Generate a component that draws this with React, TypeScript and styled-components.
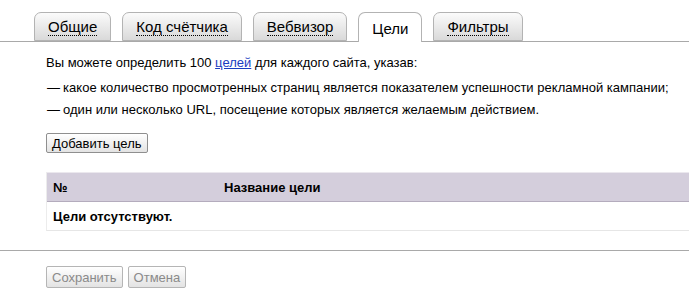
import React from 'react';
import styled, { createGlobalStyle } from 'styled-components';

type Tab = {
    title: string;
    active?: boolean;
};

const tabs: Tab[] = [
    { title: 'Общие' },
    { title: 'Код счётчика' },
    { title: 'Вебвизор' },
    { title: 'Цели', active: true },
    { title: 'Фильтры' },
];

export default function App() {
    return (
        <StyledPage>
            <GlobalStyle />
            <StyledTabs>
                {tabs.map((tab) => (
                    <StyledTab key={tab.title} active={tab.active}>
                        <StyledTabTitle active={tab.active}>{tab.title}</StyledTabTitle>
                    </StyledTab>
                ))}
            </StyledTabs>
            <StyledContent>
                <StyledIntro>
                    Вы можете определить 100 <StyledLink href="#">целей</StyledLink> для
                    каждого сайта, указав:
                </StyledIntro>
                <StyledList>
                    <StyledItem>
                        какое количество просмотренных страниц является показателем
                        успешности рекламной кампании;
                    </StyledItem>
                    <StyledItem>
                        один или несколько URL, посещение которых является желаемым
                        действием.
                    </StyledItem>
                </StyledList>
                <StyledButton>Добавить цель</StyledButton>
                <StyledTable>
                    <StyledHead>
                        <StyledNumCell>№</StyledNumCell>
                        <StyledCell>Название цели</StyledCell>
                    </StyledHead>
                    <StyledRow>
                        <StyledCell>Цели отсутствуют.</StyledCell>
                    </StyledRow>
                </StyledTable>
            </StyledContent>
            <StyledFooter>
                <StyledButton disabled tall>
                    Сохранить
                </StyledButton>
                <StyledButton disabled tall>
                    Отмена
                </StyledButton>
            </StyledFooter>
        </StyledPage>
    );
}

const GlobalStyle = createGlobalStyle`
    body {
        margin: 0;
        background: #ffffff;
        font-family: "Liberation Sans", Arial, sans-serif;
        font-size: 13px;
        color: #000000;
    }
`;

const StyledPage = styled.div`
    width: 689px;
    height: 307px;
    overflow: hidden;
    padding-top: 12px;
    box-sizing: border-box;
`;

const StyledTabs = styled.div`
    display: flex;
    align-items: flex-end;
    gap: 11px;
    padding-left: 34px;
    height: 30px;
    box-sizing: border-box;
    border-bottom: 1px solid #a9a9a9;
`;

const StyledTab = styled.div<{ active?: boolean }>`
    height: ${(props) => (props.active ? '30px' : '29px')};
    margin-bottom: ${(props) => (props.active ? '-1px' : '0')};
    padding: 0 13px;
    display: flex;
    align-items: center;
    box-sizing: border-box;
    border: 1px solid #b3b3b3;
    border-bottom: ${(props) => (props.active ? 'none' : '1px solid #b3b3b3')};
    border-radius: 7px 7px 0 0;
    background: ${(props) =>
        props.active ? '#ffffff' : 'linear-gradient(#fbfbfb, #d9d9d9)'};
    padding-top: ${(props) => (props.active ? '1px' : '0')};
`;

const StyledTabTitle = styled.span<{ active?: boolean }>`
    font-size: 15px;
    line-height: 17px;
    color: #000000;
    border-bottom: ${(props) => (props.active ? 'none' : '1px dotted #000000')};
`;

const StyledContent = styled.div`
    padding: 13px 0 0 46px;
`;

const StyledIntro = styled.p`
    margin: 0;
    line-height: 16px;
`;

const StyledLink = styled.a`
    color: #1a3dc1;
`;

const StyledList = styled.ul`
    list-style: none;
    margin: 9px 0 0;
    padding: 0 0 0 1px;
    display: flex;
    flex-direction: column;
    gap: 6px;
`;

const StyledItem = styled.li`
    line-height: 16px;
    letter-spacing: 0.02px;

    &::before {
        content: '—';
        margin-right: 3px;
    }
`;

const StyledButton = styled.button<{ tall?: boolean }>`
    height: ${(props) => (props.tall ? '22px' : '20px')};
    padding: 0 5px;
    margin-top: ${(props) => (props.tall ? '0' : '15px')};
    font-family: "Liberation Sans", Arial, sans-serif;
    font-size: 13px;
    color: ${(props) => (props.disabled ? '#8a8a8a' : '#000000')};
    background: linear-gradient(#ffffff, #e3e3e3);
    border: 1px solid ${(props) => (props.disabled ? '#b5b5b5' : '#8f8f8f')};
    border-radius: 2px;
`;

const StyledTable = styled.div`
    margin-top: 19px;
    width: 700px;
    border-left: 1px solid #ececec;
    border-bottom: 1px solid #e6e6e6;
`;

const StyledHead = styled.div`
    display: flex;
    align-items: center;
    height: 30px;
    box-sizing: border-box;
    background: #d4cedc;
    border-top: 1px solid #ebe8ee;
    border-bottom: 1px solid #b4acbd;
    font-weight: bold;
`;

const StyledRow = styled.div`
    display: flex;
    align-items: center;
    height: 28px;
    font-weight: bold;
`;

const StyledCell = styled.div`
    padding: 0 6px;
`;

const StyledNumCell = styled(StyledCell)`
    width: 159px;
`;

const StyledFooter = styled.div`
    margin-top: 19px;
    border-top: 1px solid #a9a9a9;
    padding: 15px 0 0 46px;
    display: flex;
    gap: 5px;
`;
